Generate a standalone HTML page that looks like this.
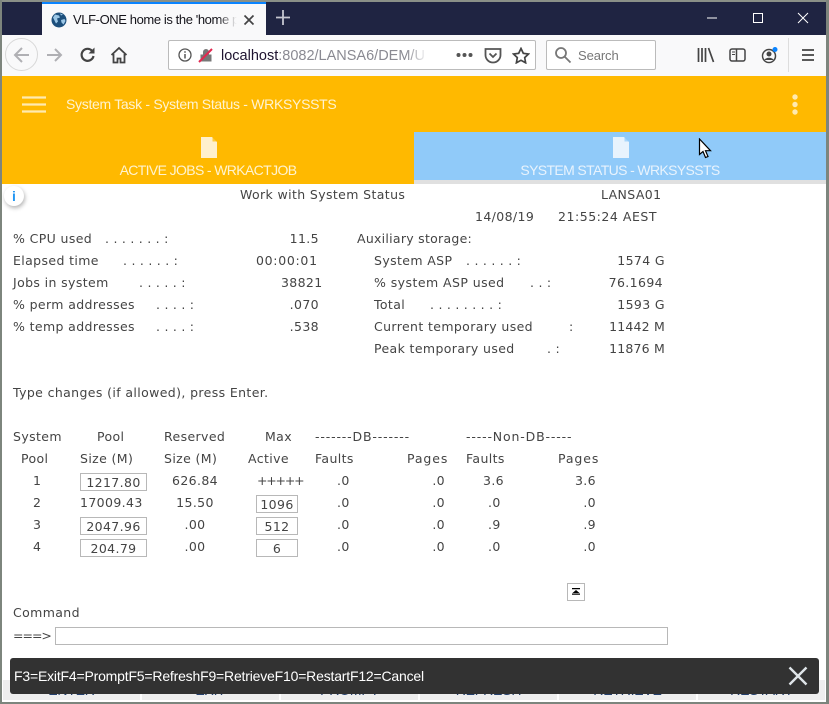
<!DOCTYPE html>
<html><head><meta charset="utf-8">
<style>
html,body{margin:0;padding:0;background:#fff;}
body{width:829px;height:704px;position:relative;overflow:hidden;font-family:"DejaVu Sans","Liberation Sans",sans-serif;}
.a{position:absolute;}
.t{position:absolute;font-size:12.5px;line-height:16px;color:#444;white-space:pre;letter-spacing:.38px;margin-top:1px;}
.d{letter-spacing:.25px;}
.h{letter-spacing:.85px;}
.r{text-align:right;}
.c{text-align:center;}
.b{position:absolute;border:1px solid #b8b8b8;box-sizing:border-box;background:#fff;}
.l{font-family:"Liberation Sans",sans-serif;white-space:pre;position:absolute;}
.n{position:absolute;background:#eee;height:20px;top:680px;}
.k{top:682px;font-size:14px;line-height:16px;letter-spacing:-.2px;color:#24406e;text-align:center;}
</style></head><body>
<!-- window frame -->
<div class="a" style="left:0;top:0;width:829px;height:35px;background:#1f2442;"></div>
<div class="a" style="left:42px;top:2px;width:224px;height:33px;background:#f9f9fa;"></div>
<div class="a" style="left:42px;top:2px;width:224px;height:2px;background:#0a84ff;"></div>
<svg class="a" style="left:51px;top:12px" width="16" height="16" viewBox="0 0 16 16"><circle cx="8" cy="8" r="7.500" fill="#1d4f7c"/><path d="M4 2.500l4 1 1 2-3 1 1 3-2 2-2-4-1-2zM10 8l3.500-1 1 2-2 3.500-2-2zM9 1.500l3 1-2 1z" fill="#9cc7e6"/></svg>
<div class="l" style="left:73px;top:11px;width:165px;overflow:hidden;font-size:13px;letter-spacing:-.4px;line-height:18px;color:#15141a;">VLF-ONE home is the 'home page' for the app</div>
<div class="a" style="left:218px;top:10px;width:21px;height:20px;background:linear-gradient(90deg,rgba(249,249,250,0),#f9f9fa 90%);"></div>
<svg class="a" style="left:243px;top:14px" width="12" height="12" viewBox="0 0 12 12"><path d="M1.500 1.500l9 9M10.500 1.500l-9 9" stroke="#444" stroke-width="1.700" fill="none"/></svg>
<svg class="a" style="left:276px;top:10px" width="14" height="15" viewBox="0 0 14 15"><path d="M7 0v15M0 7.500h14" stroke="#c5c6d0" stroke-width="1.800" fill="none"/></svg>
<svg class="a" style="left:706px;top:6px" width="115" height="24" viewBox="0 0 115 24"><path d="M1 12h10" stroke="#fff" stroke-width="1"/><rect x="47.500" y="7.500" width="9" height="9" fill="none" stroke="#fff"/><path d="M92 7l10 10M102 7l-10 10" stroke="#fff" stroke-width="1" fill="none"/></svg>

<!-- toolbar -->
<div class="a" style="left:0;top:35px;width:829px;height:41px;background:#f9f9fa;"></div>
<div class="a" style="left:5px;top:38px;width:33px;height:33px;border-radius:50%;border:1px solid #d8d8d8;box-sizing:border-box;"></div>
<svg class="a" style="left:13px;top:46px" width="18" height="18" viewBox="0 0 18 18"><path d="M16 9H2M9 2L2 9l7 7" stroke="#b0b0b4" stroke-width="2" fill="none"/></svg>
<svg class="a" style="left:46px;top:46px" width="18" height="18" viewBox="0 0 18 18"><path d="M1 9h14M9 3l6 6-6 6" stroke="#b0b0b4" stroke-width="2" fill="none"/></svg>
<svg class="a" style="left:79px;top:46px" width="18" height="18" viewBox="0 0 18 18"><path d="M14.500 10a6 6 0 1 1-1.500-5.300" stroke="#444" stroke-width="2.200" fill="none"/><path d="M15.500 1.500v6h-6z" fill="#444"/></svg>
<svg class="a" style="left:110px;top:46px" width="18" height="18" viewBox="0 0 18 18"><path d="M1.500 9L9 2l7.500 7M3.500 8v8.500h4v-4h3v4h4V8" stroke="#444" stroke-width="1.800" fill="none"/></svg>

<div class="a" style="left:168px;top:40px;width:368px;height:30px;background:#fff;border:1px solid #bbb;border-radius:2px;box-sizing:border-box;"></div>
<svg class="a" style="left:178px;top:48px" width="14" height="14" viewBox="0 0 14 14"><circle cx="7" cy="7" r="6" fill="none" stroke="#555" stroke-width="1.300"/><path d="M7 6v4.500M7 3.300v1.500" stroke="#555" stroke-width="1.500"/></svg>
<svg class="a" style="left:198px;top:47px" width="16" height="16" viewBox="0 0 16 16"><path d="M2.500 7.500h11v7h-11zM5 7.500V5a3 3 0 0 1 6 0v2.500" fill="#777"/><path d="M1 15L14 2" stroke="#e22850" stroke-width="2"/></svg>
<div class="l" style="left:221px;top:47px;width:205px;overflow:hidden;font-size:14.500px;line-height:18px;color:#8a8a92;"><span style="color:#1f1430">localhost</span>:8082/LANSA6/DEM/UF_Exec</div>
<div class="a" style="left:406px;top:44px;width:22px;height:22px;background:linear-gradient(90deg,rgba(255,255,255,0),#fff);"></div>
<svg class="a" style="left:456px;top:47px" width="18" height="16" viewBox="0 0 18 16"><circle cx="2.500" cy="8" r="2" fill="#555"/><circle cx="8.500" cy="8" r="2" fill="#555"/><circle cx="14.500" cy="8" r="2" fill="#555"/></svg>
<svg class="a" style="left:484px;top:47px" width="18" height="17" viewBox="0 0 18 17"><path d="M1.500 2h15v6a7.500 7.500 0 0 1-15 0z" fill="none" stroke="#555" stroke-width="1.800"/><path d="M5.500 6.500L9 10l3.500-3.500" fill="none" stroke="#555" stroke-width="1.800"/></svg>
<svg class="a" style="left:512px;top:47px" width="18" height="17" viewBox="0 0 18 17"><path d="M9 1.500l2.300 4.800 5.200.7-3.800 3.600.9 5.200L9 13.300l-4.600 2.500.9-5.200L1.500 7l5.200-.7z" fill="none" stroke="#444" stroke-width="1.700"/></svg>

<div class="a" style="left:546px;top:40px;width:110px;height:30px;background:#fff;border:1px solid #bbb;border-radius:2px;box-sizing:border-box;"></div>
<svg class="a" style="left:554px;top:46px" width="18" height="18" viewBox="0 0 18 18"><circle cx="7" cy="7" r="5" fill="none" stroke="#777" stroke-width="1.800"/><path d="M11 11l5.500 5.500" stroke="#777" stroke-width="1.800"/></svg>
<div class="l" style="left:578px;top:47px;font-size:13px;letter-spacing:-.1px;line-height:18px;color:#777;">Search</div>

<svg class="a" style="left:697px;top:47px" width="18" height="16" viewBox="0 0 18 16"><path d="M1.500 1v14M5 1v14M8.500 1v14M11.500 1l5 14" stroke="#444" stroke-width="1.700" fill="none"/></svg>
<svg class="a" style="left:729px;top:47px" width="17" height="16" viewBox="0 0 17 16"><rect x="1" y="2" width="15" height="12" rx="2" fill="none" stroke="#444" stroke-width="1.500"/><path d="M7.500 2v12" stroke="#444" stroke-width="1.500"/><path d="M3 5h3M3 7.500h3" stroke="#444"/></svg>
<svg class="a" style="left:761px;top:46px" width="18" height="18" viewBox="0 0 18 18"><circle cx="8" cy="10" r="6.500" fill="none" stroke="#444" stroke-width="1.500"/><circle cx="8" cy="8" r="2.500" fill="#444"/><path d="M3.500 14c1-3 8-3 9 0" fill="#444"/><circle cx="14" cy="3.500" r="2.500" fill="#0a84ff"/></svg>
<div class="a" style="left:788px;top:38px;width:1px;height:34px;background:#ddd;"></div>
<svg class="a" style="left:801px;top:48px" width="14" height="14" viewBox="0 0 14 14"><path d="M1 2h12M1 7h12M1 12h12" stroke="#444" stroke-width="1.800"/></svg>

<!-- app bar -->
<div class="a" style="left:0;top:76px;width:829px;height:108px;background:#ffb900;"></div>
<div class="a" style="left:414px;top:132px;width:412px;height:48px;background:#90caf9;"></div>
<div class="a" style="left:414px;top:180px;width:412px;height:4px;background:#e0e0e0;"></div>
<svg class="a" style="left:22px;top:96px" width="24" height="17" viewBox="0 0 24 17"><path d="M0 1.500h24M0 8.500h24M0 15.500h24" stroke="#ffeab0" stroke-width="2.200"/></svg>
<div class="l" style="left:66px;top:95px;font-size:14px;letter-spacing:-.3px;line-height:18px;color:#fff3d0;">System Task - System Status - WRKSYSSTS</div>
<svg class="a" style="left:791px;top:93px" width="8" height="23" viewBox="0 0 8 23"><circle cx="4" cy="4" r="2.700" fill="#ffeab0"/><circle cx="4" cy="11.500" r="2.700" fill="#ffeab0"/><circle cx="4" cy="19" r="2.700" fill="#ffeab0"/></svg>
<svg class="a" style="left:200px;top:137px" width="18" height="21" viewBox="0 0 18 21"><path d="M1 0h11l5 5v16H1z" fill="#fff0cc"/><path d="M12.500 0l4.500 4.500h-4.500z" fill="#ffb900" opacity=".7"/></svg>
<div class="l c" style="left:0;top:161px;width:416px;font-size:14px;letter-spacing:-.63px;line-height:18px;color:#fff3d0;">ACTIVE JOBS - WRKACTJOB</div>
<svg class="a" style="left:612px;top:137px" width="18" height="21" viewBox="0 0 18 21"><path d="M1 0h11l5 5v16H1z" fill="#e8f3fd"/><path d="M12.500 0l4.500 4.500h-4.500z" fill="#90caf9" opacity=".7"/></svg>
<div class="l c" style="left:414px;top:161px;width:412px;font-size:14px;letter-spacing:-.63px;line-height:18px;color:#e8f3fd;">SYSTEM STATUS - WRKSYSSTS</div>
<svg class="a" style="left:698px;top:138px" width="14" height="21" viewBox="0 0 14 21"><path d="M1.500 1v15.500l3.500-3 2.500 6 2.500-1-2.500-5.800H12.500z" fill="#fff" stroke="#000" stroke-width="1.200"/></svg>

<!-- info button -->
<div class="a" style="left:4px;top:186px;width:20px;height:20px;border-radius:50%;background:#fff;box-shadow:1px 2px 4px rgba(0,0,0,.3);"></div>
<div class="l c" style="left:4px;top:187px;width:20px;font-size:14px;line-height:18px;font-weight:bold;color:#2196f3;">i</div>

<!-- 5250 screen -->
<div class="t" style="left:240px;top:186px;">Work with System Status</div>
<div class="t" style="left:601px;top:186px;">LANSA01</div>
<div class="t" style="left:475px;top:208px;">14/08/19</div>
<div class="t" style="left:558px;top:208px;letter-spacing:.53px;">21:55:24 AEST</div>

<div class="t" style="left:13px;top:230px;">% CPU used</div><div class="t d" style="left:105px;top:230px;">. . . . . . . :</div>
<div class="t" style="left:13px;top:252px;">Elapsed time</div><div class="t d" style="left:123px;top:252px;">. . . . . . :</div>
<div class="t" style="left:13px;top:274px;">Jobs in system</div><div class="t d" style="left:139px;top:274px;">. . . . . :</div>
<div class="t" style="left:13px;top:296px;">% perm addresses</div><div class="t d" style="left:156px;top:296px;">. . . . :</div>
<div class="t" style="left:13px;top:318px;">% temp addresses</div><div class="t d" style="left:156px;top:318px;">. . . . :</div>
<div class="t r" style="left:219px;top:230px;width:100px;">11.5</div>
<div class="t" style="left:256px;top:252px;letter-spacing:.7px;">00:00:01</div>
<div class="t" style="left:281px;top:274px;letter-spacing:.35px;">38821</div>
<div class="t r" style="left:219px;top:296px;width:100px;">.070</div>
<div class="t r" style="left:219px;top:318px;width:100px;">.538</div>

<div class="t" style="left:357px;top:230px;letter-spacing:.27px;">Auxiliary storage:</div>
<div class="t" style="left:374px;top:252px;">System ASP</div><div class="t d" style="left:466px;top:252px;">. . . . . . :</div>
<div class="t" style="left:374px;top:274px;letter-spacing:.44px;">% system ASP used</div><div class="t d" style="left:530px;top:274px;">. . :</div>
<div class="t" style="left:374px;top:296px;">Total</div><div class="t d" style="left:430px;top:296px;">. . . . . . . . :</div>
<div class="t" style="left:374px;top:318px;">Current temporary used</div><div class="t d" style="left:569px;top:318px;">:</div>
<div class="t" style="left:374px;top:340px;">Peak temporary used</div><div class="t d" style="left:547px;top:340px;">. :</div>
<div class="t r" style="left:565px;top:252px;width:100px;">1574 G</div>
<div class="t r" style="left:563px;top:274px;width:100px;">76.1694</div>
<div class="t r" style="left:565px;top:296px;width:100px;">1593 G</div>
<div class="t r" style="left:565px;top:318px;width:100px;letter-spacing:.2px;">11442 M</div>
<div class="t r" style="left:565px;top:340px;width:100px;letter-spacing:.2px;">11876 M</div>

<div class="t" style="left:13px;top:384px;">Type changes (if allowed), press Enter.</div>

<div class="t" style="left:13px;top:428px;">System</div>
<div class="t" style="left:97px;top:428px;">Pool</div>
<div class="t" style="left:164px;top:428px;">Reserved</div>
<div class="t" style="left:265px;top:428px;">Max</div>
<div class="t h" style="left:315px;top:428px;">-------DB-------</div>
<div class="t h" style="left:466px;top:428px;">-----Non-DB-----</div>
<div class="t" style="left:21px;top:450px;">Pool</div>
<div class="t" style="left:80px;top:450px;">Size (M)</div>
<div class="t" style="left:164px;top:450px;">Size (M)</div>
<div class="t" style="left:248px;top:450px;">Active</div>
<div class="t" style="left:315px;top:450px;">Faults</div>
<div class="t" style="left:407px;top:450px;letter-spacing:.9px;">Pages</div>
<div class="t" style="left:466px;top:450px;">Faults</div>
<div class="t" style="left:558px;top:450px;letter-spacing:.9px;">Pages</div>

<div class="t" style="left:33px;top:472px;">1</div>
<div class="t" style="left:33px;top:494px;">2</div>
<div class="t" style="left:33px;top:516px;">3</div>
<div class="t" style="left:33px;top:538px;">4</div>

<div class="b" style="left:80px;top:473px;width:67px;height:18px;"></div>
<div class="b" style="left:80px;top:517px;width:67px;height:18px;"></div>
<div class="b" style="left:80px;top:539px;width:67px;height:18px;"></div>
<div class="b" style="left:256px;top:495px;width:42px;height:18px;"></div>
<div class="b" style="left:256px;top:517px;width:42px;height:18px;"></div>
<div class="b" style="left:256px;top:539px;width:42px;height:18px;"></div>
<div class="t c" style="left:80px;top:474px;width:67px;">1217.80</div>
<div class="t" style="left:80px;top:494px;">17009.43</div>
<div class="t c" style="left:80px;top:518px;width:67px;">2047.96</div>
<div class="t c" style="left:80px;top:540px;width:67px;">204.79</div>
<div class="t c" style="left:160px;top:472px;width:70px;">626.84</div>
<div class="t c" style="left:160px;top:494px;width:70px;">15.50</div>
<div class="t c" style="left:160px;top:516px;width:70px;">.00</div>
<div class="t c" style="left:160px;top:538px;width:70px;">.00</div>
<div class="t" style="left:257px;top:472px;letter-spacing:-1.2px;">+++++</div>
<div class="t c" style="left:256px;top:496px;width:42px;">1096</div>
<div class="t c" style="left:256px;top:518px;width:42px;">512</div>
<div class="t c" style="left:256px;top:540px;width:42px;">6</div>

<div class="t" style="left:337px;top:472px;">.0</div><div class="t" style="left:337px;top:494px;">.0</div><div class="t" style="left:337px;top:516px;">.0</div><div class="t" style="left:337px;top:538px;">.0</div>
<div class="t r" style="left:345px;top:472px;width:100px;">.0</div><div class="t r" style="left:345px;top:494px;width:100px;">.0</div><div class="t r" style="left:345px;top:516px;width:100px;">.0</div><div class="t r" style="left:345px;top:538px;width:100px;">.0</div>
<div class="t" style="left:483px;top:472px;">3.6</div><div class="t" style="left:488px;top:494px;">.0</div><div class="t" style="left:488px;top:516px;">.9</div><div class="t" style="left:488px;top:538px;">.0</div>
<div class="t r" style="left:496px;top:472px;width:100px;">3.6</div><div class="t r" style="left:496px;top:494px;width:100px;">.0</div><div class="t r" style="left:496px;top:516px;width:100px;">.9</div><div class="t r" style="left:496px;top:538px;width:100px;">.0</div>

<div class="b" style="left:567px;top:583px;width:18px;height:18px;"></div>
<svg class="a" style="left:571px;top:587px" width="10" height="9" viewBox="0 0 10 9"><path d="M1 1h8v1.200H1zM5 3l3.500 3H1.500zM1 6.500h8v1.200H1z" fill="#000"/></svg>

<div class="t" style="left:13px;top:604px;">Command</div>
<div class="t" style="left:13px;top:627px;letter-spacing:-1px;">===&gt;</div>
<div class="b" style="left:55px;top:627px;width:613px;height:18px;"></div>

<!-- bottom buttons under the snackbar -->
<div class="n" style="left:3px;width:137px;"></div>
<div class="n" style="left:142px;width:137px;"></div>
<div class="n" style="left:281px;width:137px;"></div>
<div class="n" style="left:420px;width:137px;"></div>
<div class="n" style="left:559px;width:137px;"></div>
<div class="n" style="left:698px;width:127px;"></div>
<div class="l k" style="left:3px;width:137px;">ENTER</div>
<div class="l k" style="left:142px;width:137px;">EXIT</div>
<div class="l k" style="left:281px;width:137px;">PROMPT</div>
<div class="l k" style="left:420px;width:137px;">REFRESH</div>
<div class="l k" style="left:559px;width:137px;">RETRIEVE</div>
<div class="l k" style="left:698px;width:127px;">RESTART</div>

<!-- snackbar -->
<div class="a" style="left:10px;top:658px;width:809px;height:36px;background:#323232;border-radius:3px;"></div>
<div class="l" style="left:14px;top:667px;font-size:14px;letter-spacing:-.19px;line-height:18px;color:#fff;">F3=ExitF4=PromptF5=RefreshF9=RetrieveF10=RestartF12=Cancel</div>
<svg class="a" style="left:788px;top:666px" width="20" height="20" viewBox="0 0 20 20"><path d="M1.500 1.500l17 17M18.500 1.500l-17 17" stroke="#dfe5e8" stroke-width="2.400" fill="none"/></svg>

<!-- window borders -->
<div class="a" style="left:0;top:0;width:829px;height:2px;background:#8a9088;"></div>
<div class="a" style="left:0;top:0;width:2px;height:704px;background:#7d857d;"></div>
<div class="a" style="left:826px;top:0;width:3px;height:704px;background:#7d857d;"></div>
<div class="a" style="left:0;top:702px;width:829px;height:2px;background:#7d857d;"></div>
</body></html>
